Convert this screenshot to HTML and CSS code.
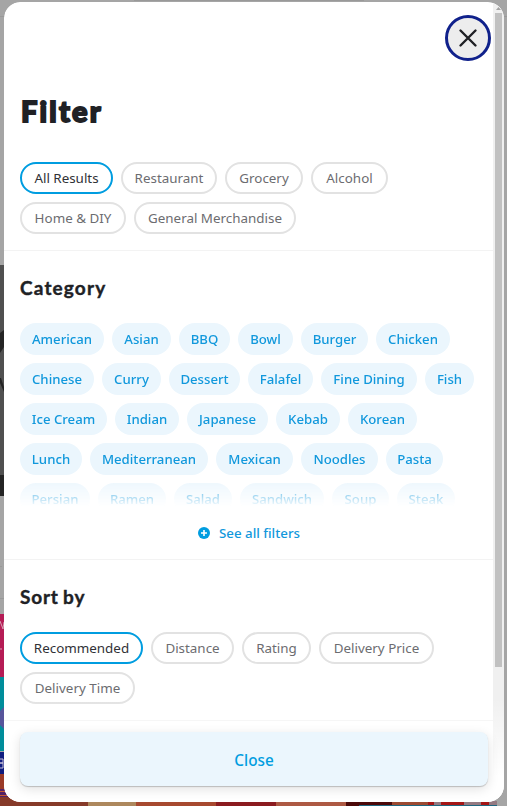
FILE: index.html
```html
<!DOCTYPE html>
<html lang="en">
<head>
<meta charset="utf-8">
<title>Filter</title>
<link rel="stylesheet" href="styles.css">
</head>
<body>
<svg class="backdrop" viewBox="0 0 507 806" aria-hidden="true">
  <path fill="#a5a5a5" d="M0 0h507v806H0z"/>
  <path fill="#999" d="M134 0h230v1H134zM0 16h5v1H0zM504 16h3v1h-3zM0 566h2v1H0zM0 598h4v1H0z"/>
  <path fill="#505050" d="M0 265h4v231H0z"/>
  <path fill="#242424" d="M0 333l4-3v17l-4 6zM0 378h1l3 9v5l-4-9zM0 475h4v21H0z"/>
  <path fill="#b51c55" d="M0 614h4v63H0z"/>
  <path stroke="#d7a0b4" fill="none" d="M0 621l3 8 1-7M0 649h2"/>
  <path fill="#008d9b" d="M0 677h4v74H0z"/>
  <path fill="#57559b" d="M0 711l4-4v22l-4-4z"/>
  <path fill="#101d80" d="M0 752h5v22H0z"/>
  <path stroke="#c9c1d7" fill="none" d="M0 759h3v4H0h3v5H0"/>
  <path fill="#9b3b28" d="M0 774h8v15H0z"/>
  <path fill="#532265" d="M0 789h12v9H0z"/>
  <path stroke="#c75b32" fill="none" d="M0 791.500h7M0 795.500h10"/>
  <path fill="#863a29" d="M0 797h20v9H0zM20 801h70v5H20z"/>
  <path fill="#ad885d" d="M88 801h48v5H88z"/>
  <path fill="#a7492f" d="M136 801h80v5h-80z"/>
  <path fill="#8b1b20" d="M216 801h60v5h-60z"/>
  <path fill="#ad5943" d="M276 801h70v5h-70z"/>
  <path fill="#4b0909" d="M346 801h46v5h-46z"/>
  <path fill="#9c4a31" d="M392 801h36v5h-36z"/>
  <path fill="#a51616" d="M428 801h61v5h-61z"/>
  <path fill="#947981" d="M434 801h7v5h-7zM464 801h17v5h-17zM489 801h8v5h-8z"/>
  <path fill="#1f6781" d="M359 805h138v1H359z"/>
</svg>
<main class="modal">
  <div class="content">
    <header class="top">
      <button class="dismiss" aria-label="Dismiss"><svg viewBox="0 0 24 24"><path d="M4.500 4.500l15 15M19.500 4.500l-15 15"/></svg></button>
    </header>
    <section class="types">
      <h1>Filter</h1>
      <div class="chips outlined">
        <button class="w93 selected">All Results</button><button class="w96">Restaurant</button><button class="w78">Grocery</button><button class="w77">Alcohol</button><button class="w106">Home &amp; DIY</button><button class="w162">General Merchandise</button>
      </div>
    </section>
    <section class="categories">
      <h2>Category</h2>
      <div class="chips filled">
        <button class="w84">American</button><button class="w59">Asian</button><button class="w51">BBQ</button><button class="w55">Bowl</button><button class="w67">Burger</button><button class="w74">Chicken</button>
        <button class="w74">Chinese</button><button class="w59">Curry</button><button class="w71">Dessert</button><button class="w65">Falafel</button><button class="w96">Fine Dining</button><button class="w49">Fish</button>
        <button class="w87">Ice Cream</button><button class="w64">Indian</button><button class="w81">Japanese</button><button class="w64">Kebab</button><button class="w69">Korean</button>
        <button class="w62">Lunch</button><button class="w118">Mediterranean</button><button class="w77">Mexican</button><button class="w77">Noodles</button><button class="w57">Pasta</button>
        <button class="w70">Persian</button><button class="w68">Ramen</button><button class="w58">Salad</button><button class="w84">Sandwich</button><button class="w57">Soup</button><button class="w58">Steak</button>
      </div>
      <button class="see-all"><svg viewBox="0 0 12 12"><circle cx="6" cy="6" r="6"/><path d="M6 3v6M3 6h6"/></svg><span>See all filters</span></button>
    </section>
    <section class="sort">
      <h2>Sort by</h2>
      <div class="chips outlined">
        <button class="w123 selected">Recommended</button><button class="w83">Distance</button><button class="w69">Rating</button><button class="w115">Delivery Price</button><button class="w115">Delivery Time</button>
      </div>
    </section>
  </div>
  <div class="scrollbar"><svg viewBox="0 0 7 5"><path d="M3.500 1L6 4H1z"/></svg><div class="thumb"></div></div>
  <footer class="footer"><button class="close">Close</button></footer>
</main>
</body>
</html>
```
FILE: styles.css
```css
* { box-sizing: border-box; }
body {
  margin: 0;
  height: 806px;
  overflow: hidden;
  background: #a5a5a5;
  font-family: "Noto Sans", "Open Sans", sans-serif;
  color: #202125;
}
button { font: inherit; color: inherit; margin: 0; padding: 0; border: 0; background: none; }
h1, h2 { margin: 0; font-family: Lato, sans-serif; stroke-linejoin: round; }
.backdrop { position: absolute; inset: 0; width: 507px; height: 806px; }
.modal {
  position: relative;
  display: flex;
  width: 500px;
  height: 800px;
  margin: 2px 0 0 4px;
  border-radius: 16px;
  background: #fff;
  overflow: hidden;
  clip-path: inset(0 round 16px);
}
.content { width: 489px; flex: none; }
.top { height: 72px; padding: 13px 2px 0 0; display: flex; justify-content: flex-end; }
.dismiss {
  width: 46px;
  height: 46px;
  border: 3px solid #10218b;
  border-radius: 50%;
  background: #ededed;
  display: flex;
  align-items: center;
  justify-content: center;
}
.dismiss svg { width: 24px; height: 24px; fill: none; stroke: #202125; stroke-width: 2.4; stroke-linecap: round; }
section { padding: 0 16px; border-bottom: 1px solid #f3f3f3; }
.types { height: 177px; padding-top: 14px; }
h1 {
  height: 74px;
  padding-left: 1px;
  font-size: 29px;
  line-height: 45px;
  font-weight: 900;
  letter-spacing: 2.2px;
  -webkit-text-stroke: 1.8px #202125;
}
.categories { height: 309px; padding-top: 24px; }
.sort { height: 161px; padding-top: 24px; }
h2 {
  height: 48px;
  font-size: 19px;
  line-height: 25px;
  font-weight: 700;
  letter-spacing: 1.15px;
  -webkit-text-stroke: .4px #202125;
}
.sort h2 { letter-spacing: .8px; word-spacing: -1px; }
.chips { display: flex; flex-wrap: wrap; align-content: flex-start; gap: 8px; font-size: 13.4px; }
.chips button {
  flex: none;
  height: 32px;
  border-radius: 16px;
  line-height: 32px;
  text-align: center;
  white-space: nowrap;
}
.outlined button { border: 2px solid #e2e2e2; line-height: 28px; color: #6c6c70; font-weight: 450; }
.outlined .selected { border-color: #009de0; color: #303136; }
.filled {
  height: 184px;
  overflow: hidden;
  color: #1198dc;
  font-size: 13.2px;
  font-weight: 530;
  -webkit-mask-image: linear-gradient(#000 155px, transparent 184px);
  mask-image: linear-gradient(#000 155px, transparent 184px);
}
.filled button { background: #ebf6fd; }
.see-all {
  display: flex;
  width: 100%;
  height: 28px;
  margin-top: 12px;
  align-items: center;
  justify-content: center;
  gap: 9px;
  padding-left: 1px;
  color: #1198dc;
  font-size: 13.3px;
  font-weight: 500;
}
.see-all svg { width: 12px; height: 12px; fill: #009de0; stroke: #fff; stroke-width: 1.6; }
.see-all circle { stroke: none; }
.scrollbar { width: 11px; height: 800px; padding: 4px 2px 0; background: #f0f0f0; }
.scrollbar svg { display: block; width: 7px; height: 5px; fill: #a3a3a3; }
.thumb { height: 654px; margin-top: 2px; background: #c1c1c1; }
.footer {
  position: absolute;
  left: 0;
  right: 0;
  bottom: 0;
  height: 104px;
  padding: 34px 16px 16px;
  background: linear-gradient(transparent, #fff 75%);
}
.close {
  display: block;
  width: 468px;
  height: 54px;
  border-radius: 8px;
  background: #ebf6fd;
  box-shadow: 0 1px 1px #0003, 0 3px 12px #0000001f;
  color: #009de0;
  font-size: 15.3px;
  line-height: 56px;
  font-weight: 530;
}
.w49 { width: 49px; } .w51 { width: 51px; } .w55 { width: 55px; }
.w57 { width: 57px; } .w58 { width: 58px; } .w59 { width: 59px; }
.w62 { width: 62px; } .w64 { width: 64px; } .w65 { width: 65px; }
.w67 { width: 67px; } .w68 { width: 68px; } .w69 { width: 69px; }
.w70 { width: 70px; } .w71 { width: 71px; } .w74 { width: 74px; }
.w77 { width: 77px; } .w78 { width: 78px; } .w81 { width: 81px; }
.w83 { width: 83px; } .w84 { width: 84px; } .w87 { width: 87px; }
.w93 { width: 93px; } .w96 { width: 96px; } .w106 { width: 106px; }
.w115 { width: 115px; } .w118 { width: 118px; } .w123 { width: 123px; }
.w162 { width: 162px; }
```
